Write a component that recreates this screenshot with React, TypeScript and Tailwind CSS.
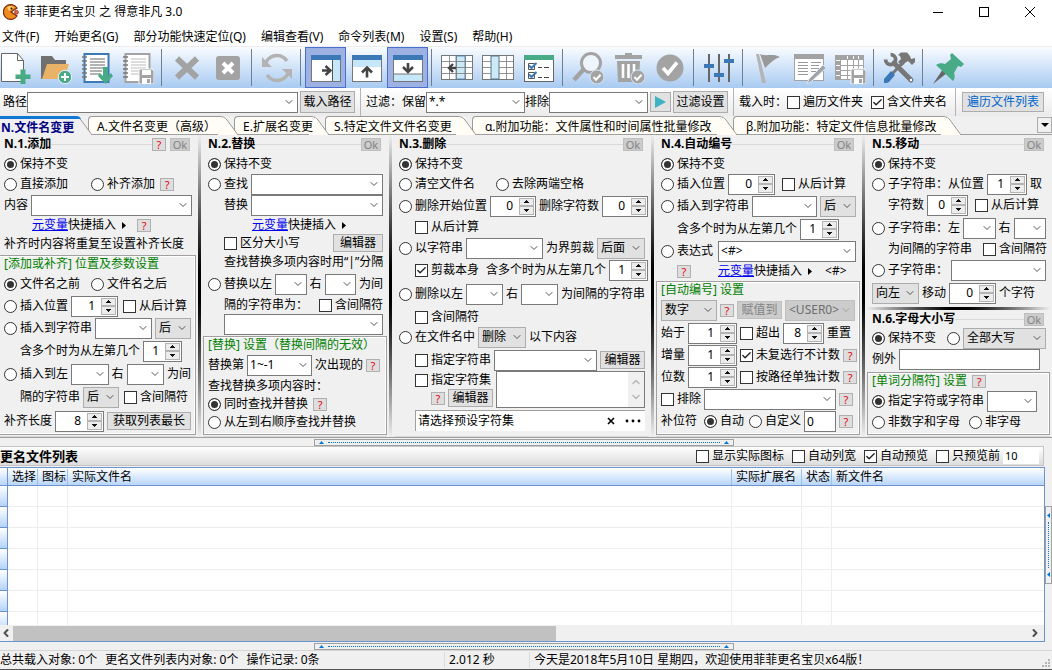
import type { ReactNode } from 'react'
import { ChevronDown, ChevronUp, Check as CheckIcon, ChevronLeft, ChevronRight } from 'lucide-react'

const menus = ['文件(F)', '开始更名(G)', '部分功能快速定位(Q)', '编辑查看(V)', '命令列表(M)', '设置(S)', '帮助(H)']

const tabs = [
  { label: 'A.文件名变更（高级）', width: 'w-[146px]', pad: 'pl-2' },
  { label: 'E.扩展名变更', width: 'w-[91px]', pad: 'pl-2' },
  { label: 'S.特定文件文件名变更', width: 'w-[147px]', pad: 'pl-2' },
  { label: 'α.附加功能：文件属性和时间属性批量修改', width: 'w-[261px]', pad: 'pl-3' },
  { label: 'β.附加功能：特定文件信息批量修改', width: 'w-[224px]', pad: 'pl-3' },
]

const BLUE = '#3b78b5'
const GREEN = '#48ab86'
const GRAY = '#a3a3a3'
const DARK = '#444444'

/* ---------- form controls ---------- */

function Row({ h = 'h-[22px]', children }: { h?: string; children?: ReactNode }) {
  return <div className={`flex shrink-0 items-center gap-[3px] ${h}`}>{children}</div>
}

function Radio({ name, label, on, className = '' }: { name: string; label: string; on?: boolean; className?: string }) {
  return (
    <label className={`flex shrink-0 items-center gap-[3px] ${className}`}>
      <input
        type="radio"
        name={name}
        defaultChecked={on}
        aria-label={label || '大小写转换'}
        className="size-[13px] shrink-0 appearance-none rounded-full border border-[#333] bg-white checked:bg-[#333] checked:shadow-[inset_0_0_0_2px_white]"
      />
      {label && <span>{label}</span>}
    </label>
  )
}

function Check({ label, on, className = '' }: { label: string; on?: boolean; className?: string }) {
  return (
    <label className={`flex shrink-0 items-center gap-[3px] ${className}`}>
      <span className="relative size-[13px] shrink-0">
        <input
          type="checkbox"
          defaultChecked={on}
          className="peer block size-[13px] appearance-none border border-[#333] bg-white"
        />
        <CheckIcon
          className="pointer-events-none absolute top-px left-px hidden size-[11px] text-[#222] peer-checked:block"
          strokeWidth={3}
        />
      </span>
      <span>{label}</span>
    </label>
  )
}

function Combo({ label, value = '', className = '' }: { label: string; value?: string; className?: string }) {
  return (
    <span className={`relative h-[21px] ${className}`}>
      <select aria-label={label} className="block h-full w-full appearance-none border border-[#7a7a7a] bg-white pr-4 pl-0.5">
        <option>{value}</option>
      </select>
      <ChevronDown className="pointer-events-none absolute top-1 right-[3px] size-3 text-[#555]" strokeWidth={2} />
    </span>
  )
}

function Pick({ label, value, className = '' }: { label: string; value: string; className?: string }) {
  return (
    <span className={`relative h-[21px] shrink-0 ${className}`}>
      <select aria-label={label} className="block h-full w-full appearance-none border border-[#adadad] bg-[#e1e1e1] pl-[3px]">
        <option>{value}</option>
      </select>
      <ChevronDown className="pointer-events-none absolute top-1 right-[3px] size-3 text-[#555]" strokeWidth={2} />
    </span>
  )
}

function Arrow({ up }: { up?: boolean }) {
  return (
    <svg viewBox="0 0 5 3" className="h-[3px] w-[5px]" shapeRendering="crispEdges">
      <path d={up ? 'M2 0h1v1H2zM1 1h3v1H1zM0 2h5v1H0z' : 'M0 0h5v1H0zM1 1h3v1H1zM2 2h1v1H2z'} fill="#111" />
    </svg>
  )
}

function Spin({ label, value, className = '' }: { label: string; value: number; className?: string }) {
  const btn = 'flex flex-1 items-center justify-center border border-[#b4b4b4] bg-[#ececec]'
  return (
    <span className={`flex h-[21px] shrink-0 border border-[#7a7a7a] bg-white p-px ${className}`}>
      <input aria-label={label} defaultValue={value} className="w-0 min-w-0 flex-1 bg-white pr-1.5 text-right outline-none" />
      <span className="flex w-[15px] shrink-0 flex-col">
        <button aria-label={`${label} +`} className={btn}><Arrow up /></button>
        <button aria-label={`${label} -`} className={btn}><Arrow /></button>
      </span>
    </span>
  )
}

function Help({ className = '' }: { className?: string }) {
  return (
    <button className={`h-[13px] w-[14px] shrink-0 border border-[#b0b0b0] bg-[#dedede] text-[11px] leading-[11px] text-red-600 ${className}`}>
      ?
    </button>
  )
}

function Btn({ children, className = 'h-[18px]' }: { children: ReactNode; className?: string }) {
  return (
    <button className={`shrink-0 border border-[#adadad] bg-[#e1e1e1] text-center leading-4 ${className}`}>{children}</button>
  )
}

function MetaLink({ className = '' }: { className?: string }) {
  return (
    <span className={`flex shrink-0 items-center ${className}`}>
      <a href="#meta" className="text-[#0000ee] underline">元变量</a>
      <span>快捷插入</span>
      <svg viewBox="0 0 4 7" className="ml-1.5 h-[7px] w-1"><path d="M0 0l4 3.5L0 7z" fill="#000" /></svg>
    </span>
  )
}

/* ---------- panels ---------- */

function Title({ children, help }: { children: ReactNode; help?: boolean }) {
  return (
    <div className="flex h-[18px] shrink-0 items-center pr-0.5">
      <h2 className="font-bold">{children}</h2>
      <span className="h-px flex-1 bg-[#d9d9d9]" />
      {help && <Help className="mr-1" />}
      <button className="h-[13px] w-5 border border-[#bfbfbf] bg-[#cccccc] text-[11px] leading-[11px] text-[#838383]">Ok</button>
    </div>
  )
}

function Panel({ first, children }: { first?: boolean; children: ReactNode }) {
  return (
    <section className="flex min-w-0">
      {!first && <span className="mr-0.5 w-[3px] shrink-0 bg-linear-to-b from-[#eee] via-black to-[#eee]" />}
      <div className="mr-0.5 flex min-w-0 flex-1 flex-col border-b border-[#d9d9d9] pb-px">{children}</div>
    </section>
  )
}

function Rows({ first, children }: { first?: boolean; children: ReactNode }) {
  return <div className={`flex flex-col ${first ? 'pl-1' : 'pl-[5px]'} pr-1`}>{children}</div>
}

function Group({ first, title, help, className = '', children }: { first?: boolean; title: string; help?: boolean; className?: string; children: ReactNode }) {
  return (
    <div
      className={`flex flex-1 flex-col border-t border-r border-b border-[#a0a0a0] pr-1 pl-1 shadow-[inset_-1px_-1px_0_white,inset_0_1px_0_white] ${first ? '' : 'border-l'} ${className}`}
    >
      <Row h="h-4">
        <span className="text-[#008000]">{title}</span>
        {help && <Help className="ml-0.5" />}
      </Row>
      {children}
    </div>
  )
}

function AddPanel() {
  return (
    <Panel first>
      <Rows first>
        <Title help>N.1.添加</Title>
        <Row><Radio name="add" label="保持不变" on /></Row>
        <Row h="h-[18px]">
          <Radio name="add" label="直接添加" />
          <Radio name="add" label="补齐添加" className="ml-5" />
          <Help className="ml-0.5" />
        </Row>
        <Row h="h-6"><span>内容</span><Combo label="内容" className="flex-1" /></Row>
        <Row h="h-4"><MetaLink className="ml-7" /><Help className="ml-2" /></Row>
        <Row h="h-[22px]">补齐时内容将重复至设置补齐长度</Row>
      </Rows>
      <Group first title="[添加或补齐] 位置及参数设置">
        <Row h="h-6">
          <Radio name="addpos" label="文件名之前" on />
          <Radio name="addpos" label="文件名之后" className="ml-2" />
        </Row>
        <Row h="h-5">
          <Radio name="addpos" label="插入位置" />
          <Spin label="插入位置" value={1} className="w-[47px]" />
          <Check label="从后计算" className="ml-0.5" />
        </Row>
        <Row h="h-6">
          <Radio name="addpos" label="插入到字符串" />
          <Combo label="字符串" className="flex-1" />
          <Pick label="方位" value="后" className="w-9" />
        </Row>
        <Row><span className="ml-4">含多个时为从左第几个</span><Spin label="第几个" value={1} className="w-[39px]" /></Row>
        <Row h="h-6">
          <Radio name="addpos" label="插入到左" />
          <Combo label="左" className="flex-1" />
          <span>右</span>
          <Combo label="右" className="flex-1" />
          <span>为间</span>
        </Row>
        <Row>
          <span className="ml-4">隔的字符串</span>
          <Pick label="间隔方位" value="后" className="w-9" />
          <Check label="含间隔符" className="ml-0.5" />
        </Row>
        <Row h="h-[26px]">
          <span>补齐长度</span>
          <Spin label="补齐长度" value={8} className="w-[49px]" />
          <Btn className="h-[18px] flex-1">获取列表最长</Btn>
        </Row>
      </Group>
    </Panel>
  )
}

function ReplacePanel() {
  return (
    <Panel>
      <Rows>
        <Title>N.2.替换</Title>
        <Row><Radio name="rep" label="保持不变" on /></Row>
        <Row h="h-[18px]"><Radio name="rep" label="查找" /><Combo label="查找" className="flex-1" /></Row>
        <Row h="h-6"><span className="ml-4">替换</span><Combo label="替换" className="flex-1" /></Row>
        <Row h="h-4"><MetaLink className="ml-11" /></Row>
        <Row h="h-5"><Check label="区分大小写" className="ml-4" /><span className="flex-1" /><Btn className="h-[18px] w-[50px]">编辑器</Btn></Row>
        <Row h="h-[18px]"><span className="ml-4">查找替换多项内容时用“|”分隔</span></Row>
        <Row h="h-[26px]">
          <Radio name="rep" label="替换以左" />
          <Combo label="左" className="flex-1" />
          <span>右</span>
          <Combo label="右" className="flex-1" />
          <span>为间</span>
        </Row>
        <Row h="h-4"><span className="ml-4">隔的字符串为：</span><span className="flex-1" /><Check label="含间隔符" /></Row>
        <Row h="h-[22px]"><Combo label="间隔字符串" className="ml-4 flex-1" /></Row>
      </Rows>
      <Group title="[替换] 设置（替换间隔的无效）" className="mt-px">
        <Row h="h-6">
          <span>替换第</span>
          <Combo label="次数" value="1~-1" className="flex-1" />
          <span>次出现的</span>
          <Help className="mr-0.5" />
        </Row>
        <Row h="h-[18px]">查找替换多项内容时：</Row>
        <Row h="h-[18px]"><Radio name="repmode" label="同时查找并替换" on /><Help className="ml-0.5" /></Row>
        <Row h="h-[18px]"><Radio name="repmode" label="从左到右顺序查找并替换" /></Row>
      </Group>
    </Panel>
  )
}

function DeletePanel() {
  return (
    <Panel>
      <Rows>
        <Title>N.3.删除</Title>
        <Row><Radio name="del" label="保持不变" on /></Row>
        <Row h="h-[18px]"><Radio name="del" label="清空文件名" /><Radio name="del" label="去除两端空格" className="ml-[18px]" /></Row>
        <Row h="h-[26px]">
          <Radio name="del" label="删除开始位置" />
          <Spin label="删除开始位置" value={0} className="w-[46px]" />
          <span>删除字符数</span>
          <Spin label="删除字符数" value={0} className="w-[46px]" />
        </Row>
        <Row h="h-4"><Check label="从后计算" className="ml-4" /></Row>
        <Row h="h-[26px]">
          <Radio name="del" label="以字符串" />
          <Combo label="字符串" className="flex-1" />
          <span>为界剪裁</span>
          <Pick label="剪裁方位" value="后面" className="w-12" />
        </Row>
        <Row h="h-[18px]">
          <Check label="剪裁本身" on className="ml-4" />
          <span className="ml-1">含多个时为从左第几个</span>
          <Spin label="第几个" value={1} className="w-[39px]" />
        </Row>
        <Row h="h-[30px]">
          <Radio name="del" label="删除以左" />
          <Combo label="左" className="flex-1" />
          <span>右</span>
          <Combo label="右" className="flex-1" />
          <span>为间隔的字符串</span>
        </Row>
        <Row h="h-4"><Check label="含间隔符" className="ml-4" /></Row>
        <Row h="h-6">
          <Radio name="del" label="在文件名中" />
          <Pick label="操作" value="删除" className="w-12" />
          <span>以下内容</span>
        </Row>
        <Row>
          <Check label="指定字符串" className="ml-4" />
          <Combo label="指定字符串" className="flex-1" />
          <Btn className="h-[18px] w-[45px]">编辑器</Btn>
        </Row>
        <div className="flex gap-[3px] pl-4">
          <div className="shrink-0">
            <Row h="h-[18px]"><Check label="指定字符集" /></Row>
            <Row h="h-[18px]"><Help className="ml-4" /><Btn className="h-[18px] w-[45px]">编辑器</Btn></Row>
          </div>
          <div className="flex h-[37px] min-w-0 flex-1 border border-[#7a7a7a] bg-white">
            <textarea aria-label="指定字符集" className="w-0 min-w-0 flex-1 resize-none outline-none" />
            <div className="flex w-4 shrink-0 flex-col items-center justify-between bg-[#f0f0f0] py-1 text-[#b8b8b8]">
              <ChevronUp className="size-3" strokeWidth={3} />
              <ChevronDown className="size-3" strokeWidth={3} />
            </div>
          </div>
        </div>
        <Row h="h-6">
          <div className="ml-4 flex h-[21px] flex-1 items-center border-t border-l border-[#a0a0a0] bg-white pr-1 pl-0.5">
            <button className="flex-1 text-left">请选择预设字符集</button>
            <button aria-label="清除" className="mr-2.5">
              <svg viewBox="0 0 8 8" className="size-2"><path d="M1 1l6 6M7 1L1 7" stroke="#000" strokeWidth="1.6" /></svg>
            </button>
            <button aria-label="更多">
              <svg viewBox="0 0 16 4" className="h-1 w-4">
                <circle cx="2" cy="2" r="1.4" /><circle cx="8" cy="2" r="1.4" /><circle cx="14" cy="2" r="1.4" />
              </svg>
            </button>
          </div>
        </Row>
      </Rows>
    </Panel>
  )
}

function NumberPanel() {
  return (
    <Panel>
      <Rows>
        <Title>N.4.自动编号</Title>
        <Row><Radio name="num" label="保持不变" on /></Row>
        <Row h="h-[18px]">
          <Radio name="num" label="插入位置" />
          <Spin label="插入位置" value={0} className="w-[47px]" />
          <Check label="从后计算" className="ml-1" />
        </Row>
        <Row h="h-[26px]">
          <Radio name="num" label="插入到字符串" />
          <Combo label="字符串" className="flex-1" />
          <Pick label="方位" value="后" className="w-9" />
        </Row>
        <Row h="h-5"><span className="ml-4">含多个时为从左第几个</span><Spin label="第几个" value={1} className="w-[39px]" /></Row>
        <Row h="h-6"><Radio name="num" label="表达式" /><Combo label="表达式" value="<#>" className="ml-0.5 flex-1" /></Row>
        <Row h="h-4"><Help className="ml-4" /><MetaLink className="ml-6" /><span className="ml-2.5">&lt;#&gt;</span></Row>
      </Rows>
      <Group title="[自动编号] 设置" className="mt-0.5">
        <Row h="h-6">
          <Pick label="编号类型" value="数字" className="w-14" />
          <Help />
          <button disabled className="h-[18px] w-[45px] border border-[#bfbfbf] bg-[#cccccc] leading-4 text-[#838383]">赋值到</button>
          <span className="relative h-[21px] flex-1">
            <select aria-label="赋值目标" disabled className="block h-full w-full appearance-none border border-[#bfbfbf] bg-[#cccccc] pl-[3px] text-[#6d6d6d] opacity-100">
              <option>&lt;USER0&gt;</option>
            </select>
            <ChevronDown className="pointer-events-none absolute top-1 right-[3px] size-3 text-[#a0a0a0]" />
          </span>
        </Row>
        <Row>
          <span>始于</span>
          <Spin label="始于" value={1} className="w-[49px]" />
          <Check label="超出" />
          <Spin label="超出" value={8} className="w-[41px]" />
          <span>重置</span>
        </Row>
        <Row>
          <span>增量</span>
          <Spin label="增量" value={1} className="w-[49px]" />
          <Check label="未复选行不计数" on />
          <Help />
        </Row>
        <Row>
          <span>位数</span>
          <Spin label="位数" value={1} className="w-[49px]" />
          <Check label="按路径单独计数" />
          <Help />
        </Row>
        <Row><Check label="排除" /><Combo label="排除" className="flex-1" /><Help className="mr-0.5" /></Row>
        <Row>
          <span>补位符</span>
          <Radio name="pad" label="自动" on className="ml-1" />
          <Radio name="pad" label="自定义" className="ml-0.5" />
          <input aria-label="自定义补位符" defaultValue="0" className="h-[21px] w-0 min-w-0 flex-1 border border-[#7a7a7a] bg-white pl-0.5" />
          <Help className="mr-0.5" />
        </Row>
      </Group>
    </Panel>
  )
}

function MovePanel() {
  return (
    <Panel>
      <Rows>
        <Title>N.5.移动</Title>
        <Row><Radio name="move" label="保持不变" on /></Row>
        <Row h="h-[18px]">
          <Radio name="move" label="子字符串：从位置" />
          <Spin label="从位置" value={1} className="w-10" />
          <span>取</span>
        </Row>
        <Row h="h-6">
          <span className="ml-4">字符数</span>
          <Spin label="字符数" value={0} className="w-[41px]" />
          <Check label="从后计算" className="ml-1" />
        </Row>
        <Row>
          <Radio name="move" label="子字符串：左" />
          <Combo label="左" className="flex-1" />
          <span>右</span>
          <Combo label="右" className="flex-1" />
        </Row>
        <Row h="h-5"><span className="ml-4">为间隔的字符串</span><Check label="含间隔符" className="ml-2" /></Row>
        <Row><Radio name="move" label="子字符串：" /><Combo label="子字符串" className="flex-1" /></Row>
        <Row h="h-6">
          <Pick label="方向" value="向左" className="w-[47px]" />
          <span>移动</span>
          <Spin label="移动" value={0} className="w-[47px]" />
          <span>个字符</span>
        </Row>
      </Rows>
      <div className="mt-0.5 h-[3px] shrink-0 bg-linear-to-r from-[#eee] via-black to-[#eee]" />
      <Rows>
        <Title>N.6.字母大小写</Title>
        <Row h="h-5">
          <Radio name="case" label="保持不变" on />
          <Radio name="case" label="" className="ml-2" />
          <Pick label="大小写" value="全部大写" className="flex-1" />
        </Row>
        <Row><label htmlFor="except">例外</label><input id="except" className="mr-1.5 h-[21px] w-0 min-w-0 flex-1 border border-[#7a7a7a] bg-white" /></Row>
      </Rows>
      <Group title="[单词分隔符] 设置" help className="mt-0.5">
        <Row h="h-6">
          <Radio name="sep" label="指定字符或字符串" on />
          <Combo label="分隔符" className="mr-2 flex-1" />
        </Row>
        <Row h="h-[18px]">
          <Radio name="sep" label="非数字和字母" />
          <Radio name="sep" label="非字母" className="ml-1.5" />
        </Row>
      </Group>
    </Panel>
  )
}

/* ---------- toolbar ---------- */

function Tool({ label, on, children }: { label: string; on?: boolean; children: ReactNode }) {
  return (
    <button
      aria-label={label}
      className={`flex h-[41px] w-[41px] shrink-0 items-center justify-center ${on ? 'border border-[#4a6fcf] bg-[#9db2e3]' : ''}`}
    >
      <svg viewBox="0 0 32 32" className="size-8 shrink-0" fill="none">{children}</svg>
    </button>
  )
}

function Sep() {
  return <span className="mr-1 ml-[3px] h-[37px] w-px shrink-0 bg-[#6f7f93]" />
}

function Notebook({ color, line }: { color: string; line: string }) {
  return (
    <>
      <rect x="3.5" y="2" width="24" height="28" fill="#fff" stroke={color} strokeWidth="2" />
      <path d="M1 5h5M1 9h5M1 13h5M1 17h5M1 21h5M1 25h5" stroke="#777" strokeWidth="1.6" />
      <path d="M9 7h15M9 10h15M9 13h15M9 16h15M9 19h12M9 22h10" stroke={line} strokeWidth="1" />
    </>
  )
}

function Floppy() {
  return (
    <>
      <path d="M17 17h13l2 2v13H17z" fill={GRAY} stroke="#f5f8fc" strokeWidth="1" />
      <path d="M20 18h9v5h-9z" fill="#fff" />
      <path d="M20 26h9v6h-9z" fill="#fff" />
      <path d="M25 27h3v4h-3z" fill={GRAY} />
    </>
  )
}

function WindowFrame({ strip }: { strip: string }) {
  return (
    <>
      <rect x="1.5" y="3.5" width="29" height="26" fill="#fff" stroke="#777" />
      <path d="M1 3h30v5H1z" fill={BLUE} />
      <path d={strip} fill="#c6e6fa" />
    </>
  )
}

function Badge() {
  return (
    <>
      <circle cx="25" cy="25" r="7" fill={GRAY} stroke="#dbe8f7" strokeWidth="1" />
      <path d="M21.5 25l2.5 2.8 4.6-5" stroke="#fff" strokeWidth="2" />
    </>
  )
}

function Toolbar() {
  return (
    <div className="flex h-[42px] shrink-0 items-center overflow-hidden border-t border-[#ececec] bg-linear-to-b from-[#fafcff] to-[#a8caf1]">
      <div className="-ml-1.5 flex items-center">
        <Tool label="新建">
          <path d="M2.5 1.5h16l6 7v21h-22z" fill="#fff" stroke="#666" />
          <path d="M18.5 1.5v7h6" stroke="#666" />
          <path d="M21.5 17.500h5v5h5v4.500h-5v5h-5v-5h-5v-4.500h5z" fill={GREEN} />
        </Tool>
        <Tool label="添加文件夹">
          <path d="M1 4h11l3 4h11v10H1z" fill="#707070" />
          <path d="M1 6v21l5-1V8z" fill="#707070" />
          <path d="M7 12h22l-5 15H2z" fill="#eab266" />
          <circle cx="25" cy="25" r="6.700" fill={GREEN} stroke="#e8f1fb" />
          <path d="M25 21v8M21 25h8" stroke="#fff" strokeWidth="2" />
        </Tool>
        <Tool label="导入列表">
          <Notebook color={BLUE} line="#666" />
          <path d="M22 15h5v9l3-3 2 3-7.500 8-7.500-8 2-3 3 3z" fill={GREEN} />
        </Tool>
        <Tool label="保存列表">
          <Notebook color={GRAY} line="#bbb" />
          <Floppy />
        </Tool>
        <Sep />
        <Tool label="移除"><path d="M6 6.500l20 19M26 6.500l-20 19" stroke={GRAY} strokeWidth="6" /></Tool>
        <Tool label="清空">
          <rect x="4" y="4" width="24" height="24" rx="3" fill={GRAY} />
          <path d="M11 11l10 10M21 11L11 21" stroke="#fff" strokeWidth="4" />
        </Tool>
        <Sep />
        <Tool label="刷新">
          <path d="M4 14A12 12 0 0 1 26 9M28 18A12 12 0 0 1 6 23" stroke="#b3b3b3" strokeWidth="3.600" />
          <path d="M1 5v10h10zM31 27V17H21z" fill="#b3b3b3" />
        </Tool>
        <Sep />
        <Tool label="右侧面板" on>
          <WindowFrame strip="M23 8h7v21h-7z" />
          <path d="M22.500 8v21" stroke="#555" />
          <path d="M12 18.500h8M15.500 14l5 4.500-5 4.500" stroke={DARK} strokeWidth="2.400" />
        </Tool>
        <Tool label="顶部面板">
          <WindowFrame strip="M2 8h28v7H2z" />
          <path d="M16 16.500v9M11 20.500l5-5 5 5" stroke={DARK} strokeWidth="2.600" />
        </Tool>
        <Tool label="底部面板" on>
          <WindowFrame strip="M2 22h28v7H2z" />
          <path d="M2 22h28" stroke="#777" />
          <path d="M16 11v8M11 15l5 5 5-5" stroke={DARK} strokeWidth="2.600" />
        </Tool>
        <Sep />
        <Tool label="冻结列">
          <rect x=".5" y="3.500" width="31" height="24" fill="#fff" stroke="#777" />
          <path d="M15 4h9v23h-9z" fill="#cde9f8" stroke={BLUE} strokeWidth=".8" />
          <path d="M1 9.500h30M1 15.500h30M1 21.500h30M8.500 4v23M15.500 4v23M24.500 4v23" stroke="#777" strokeWidth=".8" />
          <path d="M15 16H9M12 12l-4 4 4 4" stroke={DARK} strokeWidth="2.400" />
        </Tool>
        <Tool label="列设置">
          <rect x=".5" y="3.500" width="31" height="24" fill="#fff" stroke="#777" />
          <path d="M1 9.500h30M1 15.500h30M1 21.500h30M24.500 4v23" stroke="#777" strokeWidth=".8" />
          <path d="M9 4h8v23H9z" fill="#cde9f8" stroke="#55738c" />
        </Tool>
        <Tool label="选项清单">
          <rect x="1.500" y="3.500" width="29" height="26" fill="#fff" stroke="#666" />
          <path d="M1 3h30v5H1z" fill={GREEN} />
          <path d="M5.500 11.500h6v6h-6zM5.500 20.500h6v6h-6z" stroke="#555" />
          <path d="M6 13.500l2.500 2.500 5-5M6 22.500l2.500 2.500 5-5" stroke={BLUE} strokeWidth="2" />
          <path d="M15 15.500h4M21 15.500h5M15 25.500h4M21 25.500h5" stroke="#444" />
        </Tool>
        <Sep />
        <Tool label="查找">
          <circle cx="19" cy="11" r="9.500" fill="#eef5fd" stroke={GRAY} strokeWidth="3" />
          <path d="M12 17L2 28" stroke={GRAY} strokeWidth="4.500" />
          <Badge />
        </Tool>
        <Tool label="删除">
          <path d="M12 1h7v2h10v4H2V3h10z" fill={GRAY} />
          <path d="M4 9h23l-1 21H5z" fill={GRAY} />
          <path d="M10 12v14M15.500 12v14M21 12v8" stroke="#fff" strokeWidth="2.600" />
          <Badge />
        </Tool>
        <Tool label="执行">
          <circle cx="16" cy="16" r="13.500" fill={GRAY} />
          <path d="M9 16l5 5.500 9-11" stroke="#fff" strokeWidth="3.600" />
        </Tool>
        <Sep />
        <Tool label="参数">
          <path d="M6 2v28M16 2v28M26 2v28" stroke="#666" strokeWidth="2" />
          <path d="M1 12h10v4H1zM11 21h10v4H11zM21 7h10v4H21z" fill={BLUE} />
        </Tool>
        <Sep />
        <Tool label="标记">
          <path d="M4 2h3l7 29h-4z" fill="#b4b4b4" />
          <path d="M8 2c6 3 12-1 20 3-6 2-10 6-15 11z" fill="#999" />
        </Tool>
        <Tool label="编辑列表">
          <rect x="1.500" y="2.500" width="29" height="26" fill="#fff" stroke={GRAY} />
          <path d="M1 2h30v5H1z" fill={GRAY} />
          <path d="M5 10.500h10M5 13.500h10M5 16.500h10M5 19.500h10M5 22.500h10M18 10.500h10M18 13.500h8M18 16.500h8M18 19.500h6" stroke="#999" />
          <path d="M16 27L30 13l3 3-14 13-5 3z" fill={GRAY} stroke="#d5e6f8" />
        </Tool>
        <Tool label="保存表格">
          <rect x="1.500" y="3.500" width="28" height="24" fill="#fff" stroke={GRAY} />
          <path d="M1 3h29v5H1zM1 3h6v25H1z" fill={GRAY} />
          <path d="M7 13.500h22M7 18.500h22M7 23.500h22M13.500 8v20M19.500 8v20M24.500 8v20" stroke={GRAY} />
          <path d="M2 8.500h4M2 13.500h4M2 18.500h4M2 23.500h4M13.500 4v3M19.500 4v3M24.500 4v3" stroke="#fff" />
          <Floppy />
        </Tool>
        <Sep />
        <Tool label="工具">
          <path d="M20.500 10L9 22" stroke="#777" strokeWidth="3" />
          <path d="M15 3l3-2.500h6l3 3.500 1 3 4-1v4l-3 3-4-4-3 2-3 3-4-4 3-3-1-3z" fill="#777" />
          <path d="M7.600 2.600A5 5 0 1 1 2.600 7.600" stroke="#777" strokeWidth="3.800" />
          <path d="M11 11l17 17" stroke="#777" strokeWidth="5" strokeLinecap="round" />
          <circle cx="28" cy="28" r="1.200" fill="#fff" />
          <path d="M8 19l4 4-6 7-2 1H1v-4z" fill={BLUE} />
        </Tool>
        <Sep />
        <Tool label="置顶">
          <path d="M11 17l4 4L1 32z" fill="#666" />
          <path d="M20 1l12 11-3 3-3-1-4 7c1 3 1 6-1 8L4 13c3-2 6-2 9-1l6-5-1-4z" fill={GREEN} />
        </Tool>
      </div>
    </div>
  )
}

/* ---------- bars ---------- */

function TitleBar() {
  return (
    <header className="flex h-6 shrink-0 items-center bg-white pl-[3px]">
      <svg viewBox="0 0 16 16" className="size-4">
        <path d="M14 4A7.400 7.400 0 1 0 14 12L8 8z" fill="#ef8a1e" stroke="#7c2b08" strokeWidth="1.200" />
        <path d="M4 3.500c2-2 5-2 7 0L6 7z" fill="#ffd06a" />
        <circle cx="8.500" cy="4.500" r="1" fill="#2b1000" />
        <circle cx="13.500" cy="8.300" r="1.900" fill="#ef6a4a" stroke="#8a2a12" strokeWidth=".8" />
      </svg>
      <h1 className="ml-[5px] flex-1">菲菲更名宝贝 之 得意非凡 3.0</h1>
      <div className="flex items-center gap-9 pr-[17px]">
        <button aria-label="最小化"><svg viewBox="0 0 10 10" className="size-2.5"><path d="M0 5.500h10" stroke="#000" /></svg></button>
        <button aria-label="最大化"><svg viewBox="0 0 10 10" className="size-2.5"><rect x=".5" y=".5" width="9" height="9" fill="none" stroke="#000" /></svg></button>
        <button aria-label="关闭"><svg viewBox="0 0 10 10" className="size-2.5"><path d="M0 0l10 10M10 0L0 10" stroke="#000" /></svg></button>
      </div>
    </header>
  )
}

function PathBar() {
  const rule = 'mx-[5px] h-full w-px shrink-0 bg-[#b5b5b5]'
  return (
    <div className="flex h-7 shrink-0 items-center bg-linear-to-b from-white to-[#ebebeb] pl-[3px]">
      <span>路径</span>
      <Combo label="路径" className="mr-0.5 flex-1" />
      <Btn className="h-[22px] w-[55px]">载入路径</Btn>
      <span className={rule} />
      <span>过滤：保留</span>
      <Combo label="保留" value="*.*" className="w-[99px]" />
      <span>排除</span>
      <Combo label="排除" className="w-[99px]" />
      <Btn className="mx-0.5 h-5 w-[21px]">
        <svg viewBox="0 0 12 12" className="mx-auto size-3"><path d="M1 0l11 6-11 6z" fill="#3fb3c4" /></svg>
      </Btn>
      <Btn className="h-[22px] w-[55px]">过滤设置</Btn>
      <span className={rule} />
      <span>载入时：</span>
      <Check label="遍历文件夹" />
      <Check label="含文件夹名" on className="ml-2" />
      <span className="ml-2 h-full w-px shrink-0 bg-[#b5b5b5]" />
      <Btn className="mr-2 ml-1.5 h-5 w-[82px] text-[#0066cc]">遍历文件列表</Btn>
    </div>
  )
}

function TabEdge({ active }: { active?: boolean }) {
  const fill = active ? '#f0f0f0' : '#fffdf5'
  return (
    <svg viewBox="0 0 20 19" className="pointer-events-none -mr-1 h-[19px] w-5 shrink-0" fill="none">
      <path d="M0 0h2C6 0 7 2 9 4l11 15H0z" fill={fill} />
      <path d="M0 .5h2C6 .5 7 2 9 4l11 15" stroke="#9a9a9a" />
      {active && <path d="M0 0h4c3 0 4 1 5 3H0z" fill="#1177d7" />}
    </svg>
  )
}

function Tabs() {
  return (
    <div className="flex h-[19px] shrink-0 items-start border-b border-[#a0a0a0] bg-[#f0f0f0]">
      <div role="tablist" className="flex flex-1">
        <button role="tab" aria-selected className="relative z-50 flex w-[88px] shrink-0">
          <span className="-mb-px h-[19px] min-w-0 flex-1 border-t-3 border-[#1177d7] bg-[#f0f0f0] pl-px text-left leading-[17px] font-bold text-[#000080]">
            <span className="relative z-10">N.文件名变更</span>
          </span>
          <TabEdge active />
        </button>
        {tabs.map((t, i) => (
          <button key={t.label} role="tab" style={{ zIndex: 40 - i }} className={`relative flex shrink-0 ${t.width}`}>
            <span className={`h-[18px] min-w-0 flex-1 rounded-tl-sm border-t border-l border-[#9a9a9a] bg-[#fffdf5] text-left leading-5 ${t.pad}`}>
              <span className="relative z-10">{t.label}</span>
            </span>
            <TabEdge />
          </button>
        ))}
      </div>
      <button aria-label="更多标签" className="mt-px flex h-4 w-[15px] items-center justify-center border border-[#adadad] bg-[#f0f0f0]">
        <svg viewBox="0 0 8 4" className="h-1 w-2"><path d="M0 0h8L4 4z" /></svg>
      </button>
    </div>
  )
}

function Splitter() {
  return (
    <div className="flex h-2 shrink-0 items-center justify-center bg-[#f0f0f0] pr-1">
      <button aria-label="折叠" className="flex h-[7px] w-2/5 items-center justify-between border border-[#a0a0a0] px-1">
        <svg viewBox="0 0 5 3" className="h-[3px] w-[5px]"><path d="M0 3l2.500-3L5 3z" fill="#0078d7" /></svg>
        <span className="mx-1 flex-1 border-t border-dotted border-[#0078d7]" />
        <svg viewBox="0 0 5 3" className="h-[3px] w-[5px]"><path d="M0 3l2.500-3L5 3z" fill="#0078d7" /></svg>
      </button>
    </div>
  )
}

/* ---------- file list ---------- */

function ListHeader() {
  return (
    <div className="mr-2 flex h-5 shrink-0 items-center border-t border-r border-b border-[#c4c4c4] bg-linear-to-b from-white to-[#dcdcdc]">
      <h2 className="flex-1 text-[13px] font-bold">更名文件列表</h2>
      <div className="flex items-center gap-2">
        <Check label="显示实际图标" />
        <Check label="自动列宽" />
        <Check label="自动预览" on />
        <div className="flex items-center gap-[3px]">
          <Check label="只预览前" />
          <input aria-label="预览数量" defaultValue="10" className="mr-1 h-4 w-9 bg-white pl-0.5 text-[11px]" />
        </div>
      </div>
    </div>
  )
}

function FileTable() {
  const cols = ['选择', '图标', '实际文件名', '实际扩展名', '状态', '新文件名']
  const last = cols.length - 1
  return (
    <div className="mt-px flex min-h-0 flex-1">
      <div className="flex min-w-0 flex-1 flex-col border-t border-r border-b border-[#6a94d0] bg-white">
        <div className="min-h-0 flex-1 overflow-hidden">
          <table className="w-full table-fixed border-separate border-spacing-0">
            <colgroup>
              <col className="w-2" />
              <col className="w-[30px]" />
              <col className="w-[30px]" />
              <col />
              <col className="w-[70px]" />
              <col className="w-[30px]" />
              <col className="w-[212px]" />
            </colgroup>
            <thead>
              <tr className="h-[18px] bg-linear-to-b from-white to-[#b4d3f9]">
                <th aria-label="行" className="border-r border-b border-[#6a94d0] p-0" />
                {cols.map((c, i) => (
                  <th key={c} className="border-b border-[#6a94d0] p-0 text-left font-normal">
                    <span className={`block h-4 pl-1 leading-4 ${i < last ? 'border-r border-[#9dbfeb]' : ''}`}>{c}</span>
                  </th>
                ))}
              </tr>
            </thead>
            <tbody>
              {Array.from({ length: 7 }, (_, r) => (
                <tr key={r} className="h-[21px]">
                  <td className="border-r border-b border-[#6a94d0] bg-linear-to-b from-white to-[#b4d3f9] p-0" />
                  {cols.map((c, i) => (
                    <td key={c} className={`border-b border-[#ededed] p-0 ${i < last ? 'border-r' : ''}`} />
                  ))}
                </tr>
              ))}
            </tbody>
          </table>
        </div>
        <div className="flex h-4 shrink-0 items-center bg-[#f0f0f0] text-[#505050]">
          <ChevronLeft className="mr-px size-3 shrink-0" strokeWidth={4} />
          <span className="h-[15px] w-[52%] bg-[#c1c1c1]" />
          <span className="flex-1" />
          <ChevronRight className="mr-[3px] size-3 shrink-0" strokeWidth={4} />
        </div>
      </div>
      <div className="flex w-[7px] shrink-0 items-center">
        <button aria-label="展开侧栏" className="-mt-5 flex h-[78px] w-full flex-col items-center justify-between border border-[#a0a0a0] py-1.5">
          <svg viewBox="0 0 3 5" className="h-[5px] w-[3px]"><path d="M3 0L0 2.500 3 5z" fill="#0078d7" /></svg>
          <span className="my-1 flex-1 border-l border-dotted border-[#0078d7]" />
          <svg viewBox="0 0 3 5" className="h-[5px] w-[3px]"><path d="M3 0L0 2.500 3 5z" fill="#0078d7" /></svg>
        </button>
      </div>
    </div>
  )
}

function StatusBar() {
  return (
    <footer className="flex h-5 shrink-0 items-center border-t border-b border-t-[#d5d5d5] border-b-[#555] bg-[#f0f0f0]">
      <div className="flex w-[444px] shrink-0 gap-2">
        <span>总共载入对象: 0个</span>
        <span>更名文件列表内对象: 0个</span>
        <span>操作记录: 0条</span>
      </div>
      <span className="w-[85px] shrink-0 border-l border-[#dcdcdc] pl-1">2.012 秒</span>
      <span className="flex-1 border-l border-[#dcdcdc] pl-1">今天是2018年5月10日 星期四，欢迎使用菲菲更名宝贝x64版！</span>
      <svg viewBox="0 0 10 10" className="mt-2 size-2.5" fill="#b5b5b5">
        <path d="M6 0h2v2H6zM3 3h2v2H3zM6 3h2v2H6zM0 6h2v2H0zM3 6h2v2H3zM6 6h2v2H6z" />
      </svg>
    </footer>
  )
}

export default function App() {
  return (
    <div className="flex h-screen flex-col overflow-hidden bg-[#f0f0f0] font-['Noto_Sans','Noto_Sans_CJK_SC',sans-serif] text-[12px] leading-4 whitespace-nowrap text-black">
      <TitleBar />
      <nav className="flex h-[22px] shrink-0 items-center gap-[15px] bg-white pl-0.5">
        {menus.map((m) => (
          <button key={m} className="pt-1">{m}</button>
        ))}
      </nav>
      <Toolbar />
      <PathBar />
      <Tabs />
      <main className="grid shrink-0 grid-cols-[198fr_191fr_262fr_211fr_190fr] border-b border-[#a0a0a0]">
        <AddPanel />
        <ReplacePanel />
        <DeletePanel />
        <NumberPanel />
        <MovePanel />
      </main>
      <Splitter />
      <ListHeader />
      <FileTable />
      <Splitter />
      <StatusBar />
    </div>
  )
}
